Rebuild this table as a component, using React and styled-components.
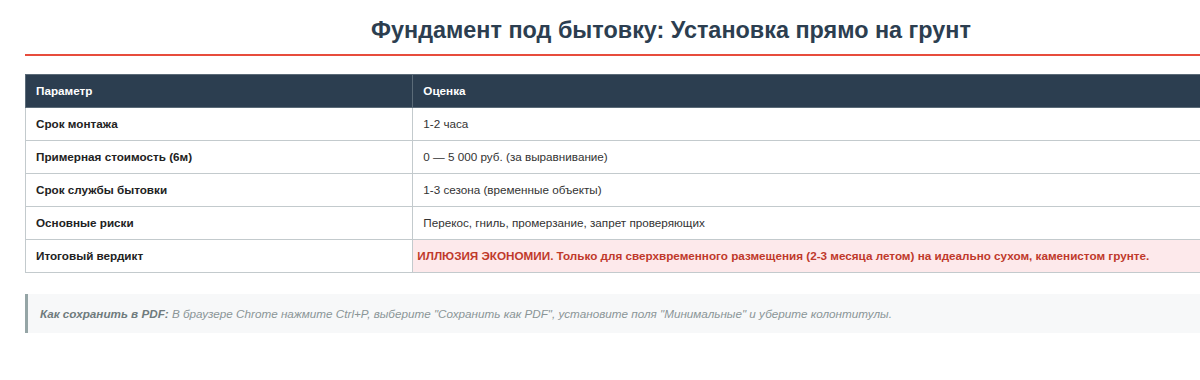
import React from "react";
import styled, { createGlobalStyle } from "styled-components";

const Global = createGlobalStyle`
  html, body { margin: 0; padding: 0; background: #ffffff; }
  body { font-family: "Liberation Sans", Arial, sans-serif; color: #333; font-size: 13px; }
`;

const Page = styled.div`
  width: 1292px;
  padding: 16px 25px 40px;
`;

const Title = styled.h1`
  margin: 0;
  padding: 0 0 10px;
  font-size: 23.4px;
  line-height: 28px;
  font-weight: 700;
  text-align: center;
  color: #2c3e50;
  border-bottom: 2px solid #e74c3c;
`;

const Table = styled.table`
  width: 100%;
  margin-top: 18px;
  border-collapse: collapse;
  border: 1px solid #c3cacd;
  font-size: 11.7px;
  line-height: 14px;
`;

const Th = styled.th`
  background: #2c3e50;
  color: #ffffff;
  font-weight: 700;
  text-align: left;
  padding: 9px 10px;
  border: 1px solid #5b6b78;
  width: ${(p) => p.$w || "auto"};
`;

const Td = styled.td`
  padding: 9px ${(p) => (p.$verdict ? "4px" : "10px")};
  border: 1px solid #c3cacd;
  text-align: left;
  color: ${(p) => (p.$verdict ? "#c0392b" : p.$label ? "#222" : "#333")};
  font-weight: ${(p) => (p.$verdict || p.$label ? 700 : 400)};
  background: ${(p) => (p.$verdict ? "#fde9eb" : "#ffffff")};
`;

const Note = styled.div`
  margin-top: 21px;
  background: #f7f8f9;
  border-left: 3px solid #95a5a6;
  padding: 12px 12px;
  font-size: 11.7px;
  line-height: 15px;
  font-style: italic;
  color: #8a9597;
`;

const NoteLead = styled.strong`
  color: #6f7b7d;
  font-weight: 700;
`;

const rows = [
  ["Срок монтажа", "1-2 часа"],
  ["Примерная стоимость (6м)", "0 — 5 000 руб. (за выравнивание)"],
  ["Срок службы бытовки", "1-3 сезона (временные объекты)"],
  ["Основные риски", "Перекос, гниль, промерзание, запрет проверяющих"],
];

export default function App() {
  return (
    <>
      <Global />
      <Page>
        <Title>Фундамент под бытовку: Установка прямо на грунт</Title>
        <Table>
          <thead>
            <tr>
              <Th $w="30%">Параметр</Th>
              <Th>Оценка</Th>
            </tr>
          </thead>
          <tbody>
            {rows.map(([k, v]) => (
              <tr key={k}>
                <Td $label>{k}</Td>
                <Td>{v}</Td>
              </tr>
            ))}
            <tr>
              <Td $label>Итоговый вердикт</Td>
              <Td $verdict>
                ИЛЛЮЗИЯ ЭКОНОМИИ. Только для сверхвременного размещения (2-3 месяца летом) на идеально сухом, каменистом грунте.
              </Td>
            </tr>
          </tbody>
        </Table>
        <Note>
          <NoteLead>Как сохранить в PDF:</NoteLead> В браузере Chrome нажмите Ctrl+P, выберите "Сохранить как PDF", установите поля "Минимальные" и уберите колонтитулы.
        </Note>
      </Page>
    </>
  );
}
